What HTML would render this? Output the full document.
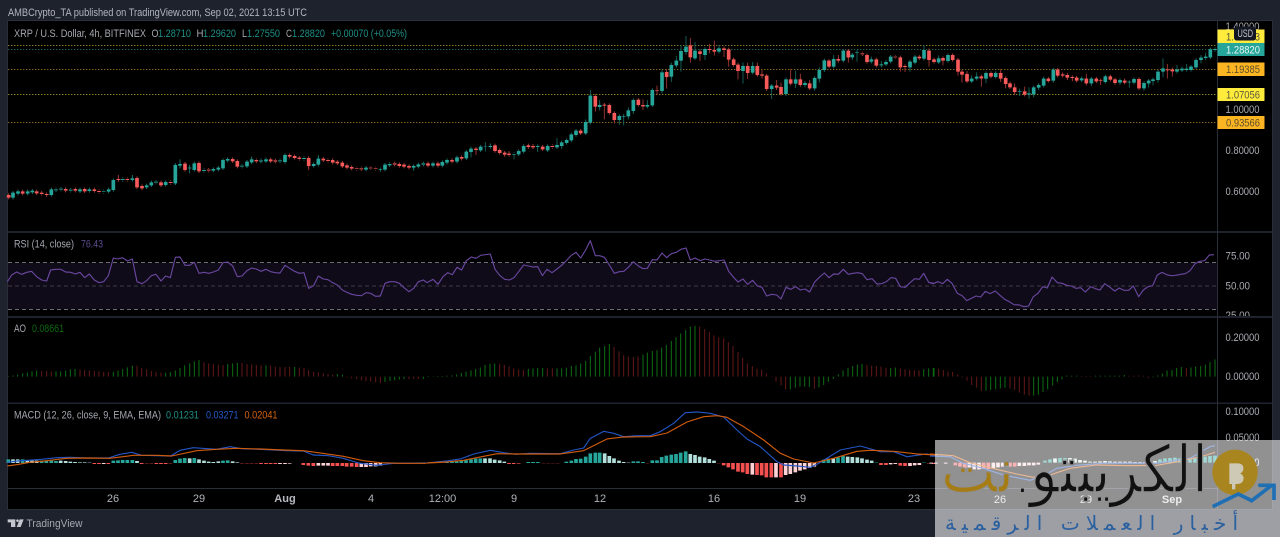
<!DOCTYPE html>
<html lang="en"><head><meta charset="utf-8"><title>XRP / U.S. Dollar chart</title>
<style>
html,body{margin:0;padding:0;background:#1e222d;width:1280px;height:537px;overflow:hidden}
svg{display:block;filter:blur(.3px)}
text{font-family:"Liberation Sans",sans-serif;font-size:11px}
.ax{fill:#a9abb2}.lg{fill:#a4a7ae}
</style></head><body>
<svg xmlns="http://www.w3.org/2000/svg" width="1280" height="537" viewBox="0 0 1280 537">
<defs>
<clipPath id="rsiclip"><rect x="1217" y="233" width="55" height="83"/></clipPath>
<path id="s1t" d="M39 578V593M54 574V581M83 574V581M97 572V577M154 568V585M168 568V571M183 566V569M212 569V572M240 568V574M268 568V573M311 574V576M326 568V575M340 540V570M368 537V540M397 535V540M440 556V562M454 547V556M468 545V548M497 546V555M526 495V550M540 492V497M569 503V505M583 490V510M612 510V513M640 507V512M655 503V509M669 480V505M683 477V482M726 497V500M741 485V499M755 478V487M783 481V485M798 478V484M840 481V484M855 465V486M912 474V477M941 492V498M955 476V494M1098 503V509M1141 508V510M1155 494V509M1169 492V496M1241 498V503M1255 493V500M1270 490V494"/>
<path id="s1r" d="M26 585V593M68 574V581M110 574V580M125 578V582M140 582V585M197 567V572M226 567V572M254 567V574M283 568V573M297 573V576M355 537V540M382 537V540M411 534V562M426 558V565M483 547V556M512 546V549M555 491V510M597 489V514M626 509V512M698 477V484M712 483V500M769 480V484M812 478V484M826 481V485M869 465V470M884 468V474M898 473V477M926 474V498M970 476V481M984 480V483M998 480V488M1012 485V490M1027 488V499M1041 496V503M1055 501V506M1070 505V507M1084 505V508M1112 503V505M1127 505V507M1184 490V494M1198 492V498M1212 494V500M1227 498V503"/>
<path id="s2t" d="M18 430V437M46 426V437M60 420V428M90 412V425M118 395V415M132 386V396M161 380V391M175 380V381M190 378V381M261 402V404M275 393V403M290 378V395M332 378V381M362 378V391M390 375V382M404 367V378M419 360V369M433 343V361M447 332V345M476 306V340M490 227V308M518 255V261M577 288V300M590 288V290M604 271V289M619 240V273M661 255V260M676 210V256M705 157V213M733 135V170M748 122V136M762 93V122M777 80V96M804 92V115M834 87V105M876 85V95M948 138V153M977 138V158M1034 197V207M1077 178V222M1106 178V191M1134 189V195M1163 174V205M1177 150V176M1192 121V150M1220 117V140M1249 92V122M1276 104V112"/>
<path id="s2r" d="M3 430V437M33 430V437M75 420V425M104 411V416M147 386V390M204 376V393M218 390V399M233 398V404M246 401V405M304 376V381M318 378V382M347 380V388M376 378V381M461 332V340M505 228V260M532 254V257M547 255V279M562 279V300M634 239V255M648 255V259M690 210V212M719 156V171M790 76V112M819 94V102M848 87V90M862 90V95M891 85V90M905 88V119M920 118V135M933 134V153M962 138V159M991 138V165M1005 163V167M1019 167V207M1049 197V203M1062 201V222M1091 178V191M1120 178V195M1148 190V205M1206 122V140M1234 117V122M1264 92V112"/>
<path id="s3t" d="M12 156V158M55 178V185M85 193V196M99 186V193M113 170V185M171 185V202M186 170V188M213 150V176M257 175V187M285 165V183M356 236V244M371 230V236M399 219V236M428 219V231M500 274V276M528 280V284M542 262V283M557 255V263M572 236V257M601 209V242M686 235V241M715 236V250M757 229V246M801 240V248M829 245V247M843 237V248M873 249V265M887 242V250M900 238V243M915 215V240M930 205V215M972 208V215M987 206V211M1001 206V210M1014 200V210M1029 180V202M1044 173V180M1058 170V174M1072 148V172M1086 147V150"/>
<path id="s3r" d="M28 160V163M42 165V186M70 178V197M127 170V172M142 172V202M156 198V201M199 170V175M228 152V180M243 178V186M270 174V182M299 165V180M315 179V215M327 215V224M342 222V244M385 229V235M414 219V230M443 219V236M458 234V252M471 250V262M485 262V276M515 274V284M586 236V243M614 209V227M629 223V227M643 225V233M658 231V234M671 233V242M700 236V250M730 236V244M743 241V243M772 229V239M786 238V249M815 242V248M858 237V265M943 208V211M958 208V214"/>
</defs>

<rect width="1280" height="537" fill="#1e222d"/>
<text x="8" y="16" class="lg" textLength="299" lengthAdjust="spacingAndGlyphs" style="fill:#b2b5be">AMBCrypto_TA published on TradingView.com, Sep 02, 2021 13:15 UTC</text>

<rect x="8" y="21" width="1264" height="488" fill="#000"/>
<rect x="7.5" y="20.5" width="1265" height="489" fill="none" stroke="#2a2e39"/>

<!-- horizontal levels -->
<g fill="none" stroke-width="1" stroke-dasharray="1.4 1.6">
<path d="M8 45.5H1217" stroke="#8b7b22"/>
<path d="M8 49.5H1217" stroke="#1d5f59"/>
<path d="M8 69.5H1217" stroke="#86641a"/>
<path d="M8 94.5H1217" stroke="#8d8523"/>
<path d="M8 122.5H1217" stroke="#86641a"/>
</g>

<!-- candles -->
<g transform="scale(.33333)" fill="none">
<g stroke="#1b7a71" stroke-width="2.6"><use href="#s1t" y="-5"/><use href="#s1t" y="5"/></g>
<g stroke="#b53c3c" stroke-width="2.6"><use href="#s1r" y="-5"/><use href="#s1r" y="5"/></g>
<path stroke="#1b7a71" stroke-width="2.6" d="M39 578V597M397 525V540M540 478V505M569 495V520M526 490V555M755 470V490M955 465V494M1141 505V515M1241 495V512"/>
<path stroke="#b53c3c" stroke-width="2.6" d="M140 580V590M355 525V545M926 470V510"/>
<g stroke="#26a69a" stroke-width="11"><use href="#s1t"/></g>
<g stroke="#f75a5a" stroke-width="11"><use href="#s1r"/></g>
</g>
<g transform="translate(427,20) scale(.33333)" fill="none">
<g stroke="#1b7a71" stroke-width="2.6"><use href="#s2t" y="-5"/><use href="#s2t" y="5"/></g>
<g stroke="#b53c3c" stroke-width="2.6"><use href="#s2r" y="-5"/><use href="#s2r" y="5"/></g>
<path stroke="#17675f" stroke-width="2.6" d="M132 380V412M175 366V395M190 370V386M261 402V418M332 376V396M390 354V384M404 362V387M476 298V345M490 210V310M518 240V271M577 284V315M590 282V316M604 262V298M619 235V282M661 240V262M676 205V260M705 148V220M733 128V186M748 108V143M762 75V155M777 48V104M804 66V120M834 82V120M876 75V98M948 127V191M977 126V160M1034 195V237M1077 178V228M1106 152V204M1134 183V202M1163 170V212M1177 142V188M1192 120V156M1220 105V142M1249 88V124M1276 100V120"/>
<path stroke="#a83838" stroke-width="2.6" d="M147 385V405M233 394V410M246 393V407M304 372V386M318 372V386M505 228V275M532 250V298M562 275V310M648 238V270M690 197V225M719 148V206M790 54V128M819 88V123M848 72V100M862 62V107M891 85V111M905 88V140M933 128V178M962 128V177M991 128V168M1005 150V176M1019 165V213M1049 180V210M1062 188V224M1091 147V193M1120 161V200M1148 180V208M1206 120V144M1234 105V128M1264 88V128"/>
<g stroke="#26a69a" stroke-width="11"><use href="#s2t"/></g>
<g stroke="#f75a5a" stroke-width="11"><use href="#s2r"/></g>
</g>
<g transform="translate(853,0) scale(.33333)" fill="none">
<g stroke="#1b7a71" stroke-width="2.6"><use href="#s3t" y="-5"/><use href="#s3t" y="5"/></g>
<g stroke="#b53c3c" stroke-width="2.6"><use href="#s3r" y="-5"/><use href="#s3r" y="5"/></g>
<path stroke="#17675f" stroke-width="2.6" d="M12 150V185M55 170V190M85 183V202M99 180V196M171 185V215M213 135V178M257 166V190M285 163V186M356 226V246M371 217V238M399 217V250M428 217V234M500 266V288M528 262V296M542 260V292M557 250V270M572 230V260M601 207V248M686 230V243M715 234V258M757 228V248M801 238V254M829 243V263M843 236V250M873 248V272M887 240V263M900 236V256M915 212V248M930 175V232M972 195V218M987 200V214M1001 192V212M1014 195V214M1029 178V203M1044 165V190M1058 158V180M1072 145V174M1086 145V152"/>
<path stroke="#a83838" stroke-width="2.6" d="M142 172V215M156 195V216M228 145V200M243 175V190M270 170V196M299 163V184M315 178V227M327 212V248M342 213V246M385 226V260M414 217V232M443 207V246M458 232V265M471 248V265M485 250V284M515 260V286M586 234V246M614 205V230M629 218V232M643 220V240M658 228V244M671 231V246M700 222V256M730 234V248M743 236V255M772 226V240M786 236V254M815 236V252M858 235V267M943 192V236M958 204V230"/>
<g stroke="#26a69a" stroke-width="11"><use href="#s3t"/></g>
<g stroke="#f75a5a" stroke-width="11"><use href="#s3r"/></g>
</g>

<text x="14" y="37" class="lg" textLength="132" lengthAdjust="spacingAndGlyphs">XRP / U.S. Dollar, 4h, BITFINEX</text>
<text x="151.5" y="37" class="lg" textLength="7" lengthAdjust="spacingAndGlyphs">O</text>
<text x="158" y="37" fill="#1d8f85" textLength="33" lengthAdjust="spacingAndGlyphs">1.28710</text>
<text x="196.5" y="37" class="lg" textLength="7" lengthAdjust="spacingAndGlyphs">H</text>
<text x="203" y="37" fill="#1d8f85" textLength="33" lengthAdjust="spacingAndGlyphs">1.29620</text>
<text x="242" y="37" class="lg" textLength="5" lengthAdjust="spacingAndGlyphs">L</text>
<text x="247" y="37" fill="#1d8f85" textLength="33" lengthAdjust="spacingAndGlyphs">1.27550</text>
<text x="286" y="37" class="lg" textLength="6" lengthAdjust="spacingAndGlyphs">C</text>
<text x="292" y="37" fill="#1d8f85" textLength="33" lengthAdjust="spacingAndGlyphs">1.28820</text>
<text x="331" y="37" fill="#1d8f85" textLength="76" lengthAdjust="spacingAndGlyphs">+0.00070 (+0.05%)</text>

<!-- pane separators -->
<g fill="#1e222d"><rect x="8" y="231" width="1264" height="2"/><rect x="8" y="316" width="1264" height="2"/><rect x="8" y="402.5" width="1264" height="1.5"/></g>
<rect x="8" y="488" width="1209" height="1" fill="#2a2e39"/>
<rect x="1217" y="21" width="1" height="488" fill="#2a2e39"/>

<!-- RSI -->
<rect x="8" y="262.7" width="1209" height="46.6" fill="#0f0b19"/>
<g stroke="#6c6c72" stroke-width="1" stroke-dasharray="4 3" fill="none">
<path d="M8 262.5H1217M8 309.5H1217"/><path d="M8 286H1217" stroke="#3f3d48"/>
</g>
<text x="14" y="247.5" class="lg" textLength="60" lengthAdjust="spacingAndGlyphs">RSI (14, close)</text>
<text x="81" y="247.5" fill="#5a4a8c" textLength="22" lengthAdjust="spacingAndGlyphs">76.43</text>
<g fill="none" stroke="#6a479f" stroke-width="3.4" stroke-linejoin="round">
<polyline transform="translate(0,230) scale(.33333)" points="22,155 35,135 50,126 65,133 80,127 95,124 110,140 125,150 140,153 152,120 168,118 183,118 197,126 212,127 226,132 240,127 254,143 268,132 283,150 297,158 311,155 325,137 340,84 354,87 368,83 382,93 397,87 411,155 426,161 440,152 454,137 468,133 483,153 497,138 511,143 526,82 540,81 555,106 569,106 583,97 597,130 612,127 626,130 640,126 655,120 669,98 683,96 698,108 712,140 726,138 741,122 755,114 769,117 783,124 798,118 812,125 826,128 840,129 855,106 869,115 884,124 898,130 912,128 926,175 941,167 955,138 970,147 984,149 998,158 1012,165 1027,180 1041,187 1055,193 1070,196 1084,197 1098,188 1112,190 1127,199 1141,198 1155,160 1169,155 1184,155 1198,160 1212,173 1227,185 1241,175 1255,155 1270,150 1281,158"/>
<polyline transform="translate(427,230) scale(.33333)" points="0,158 18,148 33,163 48,140 62,128 76,134 90,112 104,120 118,92 133,81 147,85 161,76 190,72 204,118 218,136 233,148 247,150 261,143 275,125 290,105 304,108 318,111 332,110 346,137 360,118 375,128 390,117 404,106 418,92 433,76 447,67 461,84 476,60 490,32 505,77 518,77 532,82 547,105 562,130 577,125 590,124 604,112 619,95 634,108 648,116 661,115 676,89 690,90 705,69 719,83 733,71 748,67 762,58 777,54 790,90 804,84 819,92 834,87 848,90 862,94 891,90 905,124 920,142 933,156 948,147 962,163 977,151 991,168 1005,172 1019,198 1034,193 1049,195 1062,207 1077,172 1091,178 1106,170 1120,180 1134,177 1148,186 1163,156 1177,142 1192,129 1206,143 1220,132 1234,133 1249,118 1264,133 1278,130 1292,128 1306,131 1320,149 1335,146 1350,162 1364,161 1378,155 1392,143 1406,145 1420,170 1435,172 1449,158 1463,146 1477,148 1490,130 1505,157 1520,162"/>
<polyline transform="translate(930,230) scale(.33333)" points="0,158 12,160 24,155 38,161 52,148 66,160 82,190 96,197 110,212 124,205 138,198 152,201 166,184 180,191 196,183 210,196 224,208 238,215 252,224 268,225 282,230 296,228 310,200 324,190 338,170 352,174 366,141 382,158 396,160 410,166 424,168 438,175 452,173 466,186 482,170 496,176 510,180 524,161 540,172 554,183 568,174 582,181 596,181 610,168 626,200 640,180 654,170 668,167 682,135 696,127 710,134 724,137 738,136 752,133 766,131 780,122 796,100 810,94 824,92 838,75 852,74"/>
</g>

<!-- AO -->
<text x="14" y="332" class="lg" textLength="12" lengthAdjust="spacingAndGlyphs">AO</text>
<text x="32" y="332" fill="#0b6a10" textLength="32" lengthAdjust="spacingAndGlyphs">0.08661</text>
<g fill="none" stroke-width="3">
<g transform="translate(0,230) scale(.33333)">
<path stroke="#0d6e13" d="M25 438V440M39 436V440M53 434V440M68 430V440M82 428V440M96 424V440M110 422V440M168 424V440M182 424V440M197 422V440M211 418V440M225 417V440M340 426V440M354 422V440M368 417V440M382 412V440M397 407V440M497 428V440M511 426V440M526 422V440M540 414V440M554 406V440M569 400V440M583 394V440M597 390V440M683 402V440M698 400V440M712 398V440M798 406V440M884 411V440M1012 432V440M1027 434V440M1155 440V456M1170 440V453M1184 440V451M1198 440V449M1212 440V447M1270 440V447"/>
<path stroke="#651818" d="M125 423V440M140 423V440M154 424V440M240 419V440M254 420V440M268 421V440M283 423V440M297 424V440M311 426V440M325 426V440M411 407V440M425 414V440M440 418V440M454 423V440M468 426V440M483 428V440M612 397V440M626 400V440M640 402V440M655 404V440M669 405V440M726 399V440M741 402V440M755 404V440M769 405V440M783 406V440M812 407V440M826 410V440M840 411V440M855 411V440M869 411V440M898 413V440M912 414V440M926 420V440M941 425V440M955 427V440M970 430V440M984 432V440M998 434V440M1041 440V442M1055 440V445M1070 440V447M1084 440V451M1098 440V454M1112 440V455M1127 440V457M1141 440V459M1227 440V447M1241 440V447M1255 440V447"/>
</g>
<g transform="translate(427,230) scale(.33333)">
<path stroke="#0d6e13" d="M4 438V440M18 439V440M32 438V440M46 438V440M60 437V440M75 436V440M89 433V440M103 429V440M117 425V440M132 421V440M146 417V440M160 412V440M174 405V440M189 401V440M203 400V440M304 417V440M318 415V440M332 414V440M347 414V440M390 415V440M404 415V440M418 413V440M433 408V440M447 406V440M461 401V440M476 393V440M490 378V440M505 365V440M518 353V440M533 348V440M547 342V440M648 374V440M661 368V440M676 363V440M690 361V440M704 353V440M718 345V440M733 333V440M747 322V440M761 310V440M776 300V440M790 290V440M804 288V440M1090 440V478M1105 440V473M1119 440V470M1133 440V470M1147 440V471M1176 440V472M1190 440V465M1204 440V456M1219 440V447M1234 433V440M1248 421V440M1263 414V440M1277 408V440M1291 404V440M1305 402V440M1391 414V440M1405 413V440M1490 418V440M1505 415V440M1519 414V440"/>
<path stroke="#651818" d="M218 401V440M232 405V440M246 409V440M260 415V440M275 419V440M289 420V440M361 415V440M376 415V440M561 351V440M576 364V440M590 376V440M604 380V440M619 381V440M633 379V440M818 290V440M833 297V440M847 306V440M861 316V440M875 322V440M890 325V440M904 336V440M918 348V440M933 366V440M947 384V440M961 400V440M976 408V440M990 416V440M1004 419V440M1018 430V440M1033 440V441M1047 440V455M1062 440V466M1076 440V478M1162 440V476M1320 405V440M1334 407V440M1348 408V440M1362 410V440M1377 413V440M1420 416V440M1434 418V440M1448 420V440M1462 421V440M1476 421V440"/>
</g>
<g transform="translate(930,230) scale(.33333)">
<path stroke="#0d6e13" d="M12 414V440M168 440V482M182 440V480M197 440V478M211 440V475M225 440V473M311 440V497M325 440V494M339 440V486M353 440V478M368 440V466M382 440V456M396 440V448M410 437V440M425 437V440M440 437V440M497 437V440M511 437V440M525 437V440M540 437V440M554 437V440M568 437V440M583 435V440M669 440V442M683 436V440M697 431V440M711 422V440M726 420V440M740 414V440M754 411V440M783 412V440M797 410V440M812 408V440M826 404V440M840 396V440M855 388V440"/>
<path stroke="#651818" d="M26 416V440M40 420V440M54 425V440M68 426V440M83 433V440M97 440V442M111 440V452M125 440V465M140 440V473M154 440V483M240 440V476M254 440V480M268 440V488M283 440V494M297 440V497M454 438V440M468 438V440M482 438V440M597 437V440M612 437V440M626 437V440M640 437V440M655 440V444M769 414V440"/>
</g>
</g>

<!-- MACD -->
<text x="14" y="418.5" class="lg" textLength="147" lengthAdjust="spacingAndGlyphs">MACD (12, 26, close, 9, EMA, EMA)</text>
<text x="166" y="418.5" fill="#1d8f85" textLength="33" lengthAdjust="spacingAndGlyphs">0.01231</text>
<text x="206" y="418.5" fill="#2459c9" textLength="32.5" lengthAdjust="spacingAndGlyphs">0.03271</text>
<text x="244.5" y="418.5" fill="#d4630e" textLength="33" lengthAdjust="spacingAndGlyphs">0.02041</text>

<g fill="none" stroke-width="11">
<g transform="translate(0,230) scale(.33333)">
<path stroke="#26a69a" d="M25 688V699M68 688V699M125 692V699M139 692V699M154 692V699M168 693V699M340 692V699M354 691V699M368 690V699M382 690V699M397 690V699M526 690V699M540 686V699M554 684V699M583 684V699M669 692V699M683 691V699"/>
<path stroke="#b2dfdb" d="M39 688V699M53 688V699M82 690V699M96 690V699M110 692V699M182 692V699M197 693V699M211 695V699M225 696V699M240 697V699M254 697V699M268 698V699M411 693V699M569 685V699M597 688V699M612 692V699M626 695V699M640 696V699M655 694V699M698 694V699M712 697V699"/>
<path stroke="#f55050" d="M283 699V702M297 699V702M325 699V702M425 699V702M469 699V702M483 699V702M497 699V702M783 699V702M798 699V702M812 699V702M826 699V702M910 699V705M925 699V707M940 699V708M998 699V708M1012 699V708M1027 699V708M1040 699V710M1055 699V710M1070 699V711"/>
<path stroke="#ffd2d6" d="M311 699V702M840 699V702M855 699V702M869 699V701M955 699V707M970 699V707M984 699V707M1084 699V711M1098 699V711M1112 699V709M1127 699V709M1141 699V707"/>
<path stroke="#5b1a1a" d="M440 699V702M454 699V702M511 699V702M726 699V702M741 699V702M755 699V702M769 699V702"/>
</g>
<g transform="translate(427,230) scale(.33333)">
<path stroke="#26a69a" d="M60 695V699M75 694V699M89 694V699M103 692V699M117 690V699M132 688V699M146 686V699M160 685V699M304 696V699M318 696V699M332 696V699M418 695V699M433 692V699M447 687V699M461 686V699M476 680V699M490 670V699M505 668V699M518 668V699M619 694V699M633 694V699M648 696V699M676 691V699M690 691V699M704 681V699M718 677V699M733 674V699M747 672V699M761 668V699M776 664V699M1190 689V699M1204 686V699M1233 682V699M1248 678V699"/>
<path stroke="#b2dfdb" d="M174 685V699M189 685V699M203 689V699M218 691V699M232 695V699M533 670V699M547 678V699M561 685V699M576 692V699M590 696V699M604 698V699M790 672V699M804 675V699M818 680V699M833 682V699M847 687V699M861 692V699M1219 684V699M1262 680V699M1276 681V699M1291 682V699M1305 685V699M1320 689V699M1334 692V699"/>
<path stroke="#f55050" d="M246 699V702M260 699V702M275 699V701M890 699V706M904 699V712M918 699V718M933 699V725M947 699V727M961 699V732M990 699V735M1004 699V736M1018 699V742M1033 699V742M1062 699V742M1362 699V705M1377 699V705M1420 699V707M1434 699V708M1520 699V702"/>
<path stroke="#ffd2d6" d="M976 699V734M1047 699V742M1076 699V735M1090 699V732M1105 699V727M1119 699V722M1133 699V718M1148 699V714M1162 699V710M1391 699V703M1405 699V702M1449 699V708M1463 699V706M1477 699V705"/>
<path stroke="#5b1a1a" d="M350 699V701M364 699V701M378 699V701M392 699V701M661 699V701M875 699V701M1505 699V702"/>
<path stroke="#1a6d66" d="M1348 697V699M1491 697V699"/>
</g>
<g transform="translate(930,400) scale(.33333)">
<path stroke="#26a69a" d="M345 182V188M360 178V188M390 174V188M405 174V188M690 178V188M705 175V188M720 174V188M735 173V188M750 175V188M765 178V188M780 176V188M795 175V188M810 172V188M825 170V188M840 168V188M855 167V188"/>
<path stroke="#d5efec" d="M375 175V188M420 174V188M435 176V188M450 180V188M465 182V188M480 185V188M495 185V188M510 184V188M525 183V188M540 184V188M555 185V188M570 185V188M585 185V188M600 185V188M615 186V188M630 186V188M645 186V188M660 185V188M675 183V188"/>
<path stroke="#f55050" d="M76 188V196M90 188V200M104 188V205M161 188V207M175 188V207M240 188V200M254 188V200"/>
<path stroke="#ffd8dc" d="M4 188V191M18 188V191M47 188V191M118 188V208M132 188V208M147 188V208M190 188V205M204 188V202M218 188V200M232 188V200M268 188V198M283 188V198M297 188V196M311 188V196M325 188V194"/>
</g>
</g>
<g fill="none" stroke-width="3.4" stroke-linejoin="round">
<polyline stroke="#2455c4" transform="translate(0,230) scale(.33333)" points="22,697 60,692 100,690 125,688 170,683 210,682 260,684 325,684 360,673 395,667 425,676 470,677 512,678 540,661 580,653 650,658 690,650 725,656 800,659 860,662 910,663 940,675 985,677 1030,685 1075,699 1130,706 1180,700 1280,699"/>
<polyline stroke="#d15c0c" transform="translate(0,230) scale(.33333)" points="22,708 50,704 90,697 140,692 200,685 260,684 330,685 400,676 470,676 515,678 590,662 650,658 710,655 780,657 850,660 910,662 960,669 1030,679 1090,692 1140,698 1200,700 1280,700"/>
<polyline stroke="#2455c4" transform="translate(427,230) scale(.33333)" points="0,699 60,693 100,687 140,672 190,661 230,668 265,673 310,670 400,671 440,660 470,654 490,625 530,604 560,610 590,620 630,617 670,617 700,605 740,580 775,548 810,546 850,550 890,561 930,600 960,627 1000,650 1050,695 1070,705 1110,708 1150,712 1175,700 1240,660 1300,648 1360,665 1400,665 1440,680 1500,672 1530,677"/>
<polyline stroke="#d15c0c" transform="translate(427,230) scale(.33333)" points="0,699 60,696 110,691 170,679 210,671 270,672 400,672 470,662 540,627 590,621 670,620 720,609 780,576 830,560 870,557 900,562 950,590 1010,630 1060,670 1100,687 1160,699 1220,685 1290,664 1330,661 1400,664 1470,672 1530,675"/>
<polyline stroke="#2455c4" transform="translate(930,400) scale(.33333)" points="0,168 60,170 100,190 160,205 220,225 300,241 340,228 380,205 440,196 520,190 600,190 680,190 780,175 840,140 855,137"/>
<polyline stroke="#d15c0c" transform="translate(930,400) scale(.33333)" points="0,162 70,167 120,188 200,208 260,222 310,232 360,225 420,205 500,195 600,197 680,196 760,182 830,165 855,157"/>
</g>

<!-- axis text -->
<g class="ax">
<text x="1225.5" y="30" textLength="34" lengthAdjust="spacingAndGlyphs">1.40000</text>
<text x="1225.5" y="113" textLength="34" lengthAdjust="spacingAndGlyphs">1.00000</text>
<text x="1225.5" y="154" textLength="34" lengthAdjust="spacingAndGlyphs">0.80000</text>
<text x="1225.5" y="195" textLength="34" lengthAdjust="spacingAndGlyphs">0.60000</text>
<text x="1225.5" y="259.5" textLength="24.5" lengthAdjust="spacingAndGlyphs">75.00</text>
<text x="1225.5" y="289.5" textLength="24.5" lengthAdjust="spacingAndGlyphs">50.00</text>
<g clip-path="url(#rsiclip)"><text x="1225.5" y="319" textLength="24.5" lengthAdjust="spacingAndGlyphs">25.00</text></g>
<text x="1225.5" y="341" textLength="34" lengthAdjust="spacingAndGlyphs">0.20000</text>
<text x="1225.5" y="380" textLength="34" lengthAdjust="spacingAndGlyphs">0.00000</text>
<text x="1225.5" y="415" textLength="34" lengthAdjust="spacingAndGlyphs">0.10000</text>
<text x="1225.5" y="441" textLength="34" lengthAdjust="spacingAndGlyphs">0.05000</text>
</g>

<!-- price labels -->
<rect x="1217.5" y="29.5" width="47" height="13.7" fill="#ffeb3b"/>
<text x="1226" y="40.5" fill="#555339" textLength="34" lengthAdjust="spacingAndGlyphs">1.31613</text>
<rect x="1217.5" y="43" width="47" height="13" fill="#26a69a"/>
<text x="1226" y="53.5" fill="#e8f5f3" textLength="34" lengthAdjust="spacingAndGlyphs">1.28820</text>
<rect x="1217.5" y="62.5" width="47" height="13.5" fill="#fbb522" rx=".6"/>
<text x="1226" y="73" fill="#5d4f2a" textLength="34" lengthAdjust="spacingAndGlyphs">1.19385</text>
<rect x="1217.5" y="88" width="47" height="13" fill="#ffeb3b" rx=".6"/>
<text x="1226" y="98.5" fill="#5b5a3a" textLength="34" lengthAdjust="spacingAndGlyphs">1.07056</text>
<rect x="1217.5" y="116" width="47" height="13" fill="#fbb522" rx=".6"/>
<text x="1226" y="126.5" fill="#5d4f2a" textLength="34" lengthAdjust="spacingAndGlyphs">0.93566</text>
<rect x="1234" y="26.5" width="22" height="14" rx="3" fill="#131722"/>
<text x="1237.5" y="37" fill="#c3c5cb" textLength="15.5" lengthAdjust="spacingAndGlyphs">USD</text>

<!-- time axis -->
<g class="ax" text-anchor="middle" style="fill:#b0b3ba">
<text x="113" y="502">26</text><text x="199" y="502">29</text>
<text x="285" y="502" style="font-weight:bold;fill:#b8bac0">Aug</text>
<text x="371" y="502">4</text><text x="442.5" y="502">12:00</text><text x="514" y="502">9</text>
<text x="600" y="502">12</text><text x="714" y="502">16</text><text x="800" y="502">19</text>
<text x="914" y="502">23</text>
</g>

<!-- TradingView logo -->
<g transform="translate(0,230) scale(.33333)" fill="#c3c6cd">
<path d="M23 868H46V891H33V877H23Z"/><circle cx="52.5" cy="872" r="4"/><path d="M59 868H71L62 891H50Z"/>
</g>
<text x="26.5" y="527" fill="#a6a9b0" textLength="56" lengthAdjust="spacingAndGlyphs">TradingView</text>

<!-- watermark -->
<rect x="935" y="440" width="345" height="97" fill="#fff" opacity=".57"/>
<g text-anchor="middle" fill="#eeeeee" style="font-size:11px">
<text x="1086" y="503">29</text>
<text x="1000" y="503">26</text>
<text x="1172" y="503" style="font-weight:bold">Sep</text>
</g>
<text x="1208" y="492" text-anchor="end" fill="#111" stroke="#8f8f8f" stroke-width="1.5" style="font-family:'DejaVu Sans',sans-serif;font-size:65px" textLength="178" lengthAdjust="spacingAndGlyphs">الكريبتو</text>
<text x="1018" y="492" fill="#111" style="font-family:'DejaVu Sans',sans-serif;font-size:28px">.</text>
<text x="1014" y="492" text-anchor="end" fill="#a67c14" stroke="#8f8f8f" stroke-width="1.2" style="font-family:'DejaVu Sans',sans-serif;font-size:62px" textLength="73" lengthAdjust="spacingAndGlyphs">نت</text>
<text x="1238" y="530" text-anchor="end" fill="#2a609f" style="font-family:'DejaVu Sans',sans-serif;font-size:20px" textLength="293" lengthAdjust="spacing">أخبار العملات الرقمية</text>
<text x="1225.5" y="466" textLength="34" lengthAdjust="spacingAndGlyphs" fill="#f2f2f2">0.00000</text>
<g transform="translate(930,400) scale(.33333)">
<circle cx="915" cy="217" r="68" fill="#a9851f"/>
<path d="M898 190H925Q942 192 940 208Q938 218 930 220Q944 226 940 240Q936 252 922 252H916V268H906V252H898Z" fill="#cdc9b4"/>
<path d="M848 320L925 282L965 302L1025 256" fill="none" stroke="#1f6fb5" stroke-width="11"/>
<path d="M985 256H1032V300" fill="none" stroke="#1f6fb5" stroke-width="11"/>
</g>
</svg>
</body></html>
